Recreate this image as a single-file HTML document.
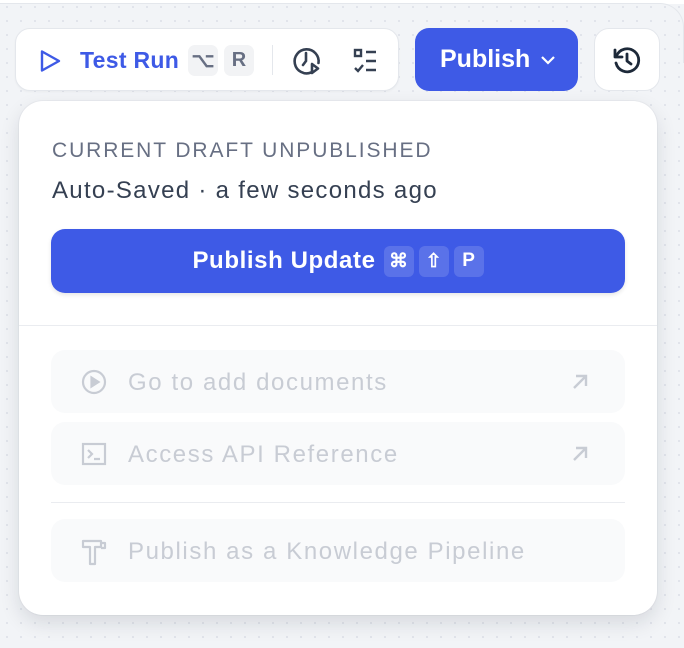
<!DOCTYPE html>
<html><head><style>
*{box-sizing:border-box;margin:0;padding:0}
body{width:684px;height:648px;overflow:hidden;background:#f2f4f7;font-family:"Liberation Sans",sans-serif;position:relative;
background-image:radial-gradient(#e0e3ea 1px,transparent 1.2px);background-size:14px 14px}
.topstrip{position:absolute;left:0;top:0;width:684px;height:4px;background:#fff}
.corner{position:absolute;left:0;top:3px;width:684px;height:60px;border-top:1px solid #e4e7ec;border-right:1px solid #e4e7ec;border-top-right-radius:24px}
.bar{position:absolute;left:15px;top:28px;width:384px;height:63px;background:#fff;border:1px solid #e4e7ec;border-radius:15px;box-shadow:0 1px 2px rgba(0,0,0,.04)}
.pub{position:absolute;left:415px;top:28px;width:163px;height:63px;background:#3e5ae6;border-radius:14px;color:#fff;font-size:25px;font-weight:bold;display:flex;align-items:center;padding-left:25px}
.hist{position:absolute;left:594px;top:28px;width:66px;height:63px;background:#fff;border:1px solid #e4e7ec;border-radius:15px;display:flex;align-items:center;justify-content:center}
.kbd{position:absolute;top:16px;width:30px;height:31px;border-radius:7px;background:#f2f3f5;color:#676f83;font-size:20px;font-weight:bold;display:flex;align-items:center;justify-content:center}
.panel{position:absolute;left:19px;top:101px;width:638px;height:514px;background:#fff;border-radius:24px;box-shadow:0 8px 20px rgba(16,24,40,.12),0 0 0 1px #eaecf0}
.lab{position:absolute;left:33px;top:38px;font-size:21px;color:#676f83;letter-spacing:1.9px}
.saved{position:absolute;left:33px;top:76px;font-size:24px;color:#354052;letter-spacing:1.3px}
.pu{position:absolute;left:32px;top:128px;width:574px;height:64px;background:#3e5ae6;border-radius:14px;box-shadow:0 2px 4px rgba(0,0,0,.1);color:#fff;font-size:24px;font-weight:bold;display:flex;align-items:center;justify-content:center;letter-spacing:.6px}
.pu span.k{display:inline-flex;width:30px;height:31px;border-radius:6px;background:rgba(255,255,255,.15);margin-left:5px;align-items:center;justify-content:center;font-size:19px;letter-spacing:0}
.hr{position:absolute;left:0;width:638px;height:1px;background:#eaecf0;top:224px}
.item{position:absolute;left:32px;width:574px;height:63px;background:#f9fafb;border-radius:14px;color:#c8ccd4;font-size:24px;letter-spacing:1.6px;display:flex;align-items:center;padding-left:77px;padding-top:2px}
.item svg.ic{position:absolute;left:30px;top:19px}
.item svg.arr{position:absolute;left:518px;top:21px}
</style></head><body>
<div class="topstrip"></div><div class="corner"></div>
<div class="bar">
 <svg style="position:absolute;left:22px;top:20px" width="24" height="24" viewBox="0 0 24 24" fill="none" stroke="#3e5ae6" stroke-width="2.4" stroke-linejoin="round"><path d="M4 2.5 L21 12 L4 21.5 Z"/></svg>
 <div style="position:absolute;left:64px;top:18px;font-size:23px;font-weight:bold;color:#3e5ae6;letter-spacing:.3px">Test Run</div>
 <div class="kbd" style="left:172px">⌥</div>
 <div class="kbd" style="left:208px">R</div>
 <div style="position:absolute;left:256px;top:16px;width:1px;height:30px;background:#e4e7ec"></div>
 <svg style="position:absolute;left:275px;top:16px" width="32" height="32" viewBox="0 0 32 32" fill="none" stroke="#354052" stroke-width="2.6" stroke-linecap="round"><path d="M20 27.5 A12 12 0 1 1 27.5 18"/><path d="M15 8v8l-3 4"/><path d="M21 19v9l6-4.5z" stroke-linejoin="round"/></svg>
 <svg style="position:absolute;left:337px;top:19px" width="26" height="26" viewBox="0 0 26 26" fill="none" stroke="#354052" stroke-width="2.4"><rect x="2" y="2" width="6" height="6"/><path d="M13 4h10M13 13h10M13 22h10M2 20l3 3 5-6"/></svg>
</div>
<div class="pub">Publish<svg style="margin-left:10px" width="16" height="12" viewBox="0 0 16 12" fill="none" stroke="#fff" stroke-width="2.2"><path d="M2 3l6 6 6-6"/></svg></div>
<div class="hist"><svg width="32" height="32" viewBox="0 0 32 32" fill="none" stroke="#1d2939" stroke-width="2.8" stroke-linecap="round" stroke-linejoin="round"><path d="M5.5 12A11.5 11.5 0 1 1 5 19"/><path d="M4 6v7h7" /><path d="M16 10v7l4 3"/></svg></div>
<div class="panel">
 <div class="lab">CURRENT DRAFT UNPUBLISHED</div>
 <div class="saved">Auto-Saved · a few seconds ago</div>
 <div class="pu">Publish Update<span class="k" style="margin-left:8px">⌘</span><span class="k">⇧</span><span class="k">P</span></div>
 <div class="hr"></div>
 <div class="item" style="top:249px">Go to add documents
  <svg class="ic" width="26" height="26" viewBox="0 0 26 26" fill="none" stroke="#c8ccd4" stroke-width="2.2"><circle cx="13" cy="13" r="11"/><path d="M10.5 8.5v9l7-4.5z" fill="#c8ccd4"/></svg>
  <svg class="arr" width="22" height="22" viewBox="0 0 22 22" fill="none" stroke="#c8ccd4" stroke-width="2.4"><path d="M5 17L17 5M7 5h10v10"/></svg></div>
 <div class="item" style="top:321px">Access API Reference
  <svg class="ic" width="26" height="26" viewBox="0 0 26 26" fill="none" stroke="#c8ccd4" stroke-width="2.2"><rect x="2" y="3" width="22" height="20"/><path d="M7 9l4 4-4 4M13 18h6"/></svg>
  <svg class="arr" width="22" height="22" viewBox="0 0 22 22" fill="none" stroke="#c8ccd4" stroke-width="2.4"><path d="M5 17L17 5M7 5h10v10"/></svg></div>
 <div class="hr" style="top:401px;left:32px;width:574px"></div>
 <div class="item" style="top:418px">Publish as a Knowledge Pipeline
  <svg class="ic" width="26" height="28" viewBox="0 0 26 28" fill="none" stroke="#c8ccd4" stroke-width="2.2" stroke-linejoin="round"><path d="M2 3h18v6H14v17H9V9H2zM20 5h4v5h-4"/></svg></div>
</div>
</body></html>
